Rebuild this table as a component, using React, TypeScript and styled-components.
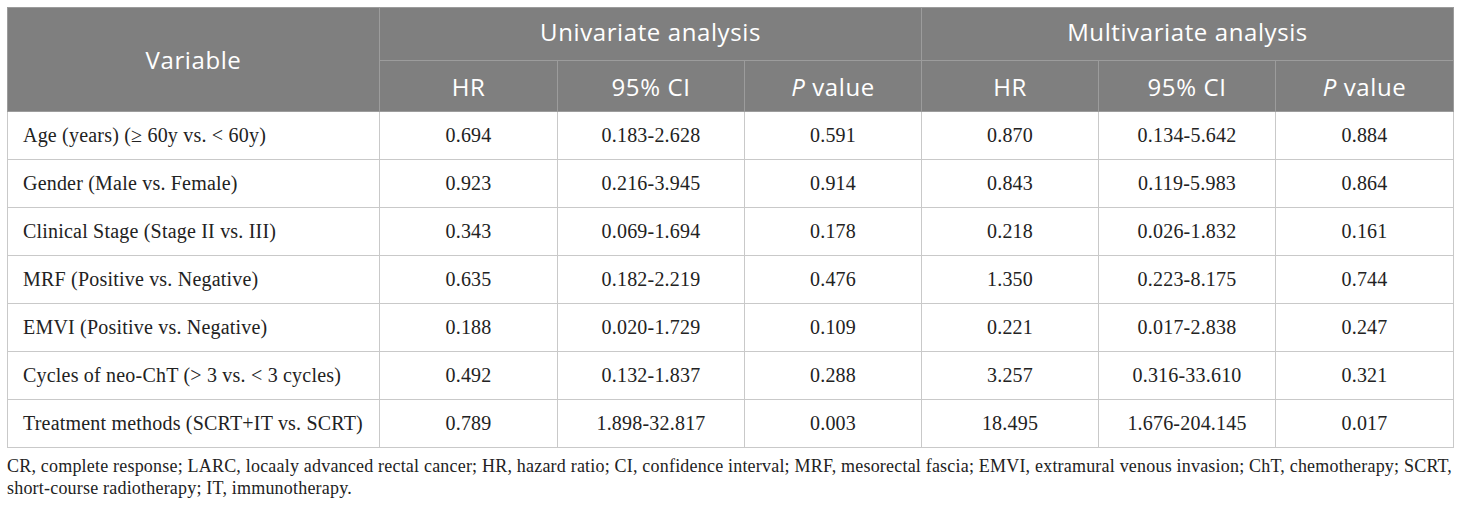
import { createGlobalStyle, styled } from "styled-components";

const GlobalStyle = createGlobalStyle`
    html, body {
        margin: 0;
        padding: 0;
        background: #fff;
    }
    body {
        font-family: "Liberation Serif", "Times New Roman", serif;
        color: #222;
    }
`;

type Row = {
    label: string;
    uni: [string, string, string];
    multi: [string, string, string];
};

const ROWS: Row[] = [
    { label: "Age (years) (≥ 60y vs. < 60y)", uni: ["0.694", "0.183-2.628", "0.591"], multi: ["0.870", "0.134-5.642", "0.884"] },
    { label: "Gender (Male vs. Female)", uni: ["0.923", "0.216-3.945", "0.914"], multi: ["0.843", "0.119-5.983", "0.864"] },
    { label: "Clinical Stage (Stage II vs. III)", uni: ["0.343", "0.069-1.694", "0.178"], multi: ["0.218", "0.026-1.832", "0.161"] },
    { label: "MRF (Positive vs. Negative)", uni: ["0.635", "0.182-2.219", "0.476"], multi: ["1.350", "0.223-8.175", "0.744"] },
    { label: "EMVI (Positive vs. Negative)", uni: ["0.188", "0.020-1.729", "0.109"], multi: ["0.221", "0.017-2.838", "0.247"] },
    { label: "Cycles of neo-ChT (> 3 vs. < 3 cycles)", uni: ["0.492", "0.132-1.837", "0.288"], multi: ["3.257", "0.316-33.610", "0.321"] },
    { label: "Treatment methods (SCRT+IT vs. SCRT)", uni: ["0.789", "1.898-32.817", "0.003"], multi: ["18.495", "1.676-204.145", "0.017"] },
];

const COLS = [372, 178, 187, 177, 177, 177, 178];

const SubHeads = () => (
    <>
        <HeadCell>HR</HeadCell>
        <HeadCell>95% CI</HeadCell>
        <HeadCell>
            <i>P</i> value
        </HeadCell>
    </>
);

export default function App() {
    return (
        <>
            <GlobalStyle />
            <Page>
                <Table>
                    <colgroup>
                        {COLS.map((w, i) => (
                            <Col key={i} $w={w} />
                        ))}
                    </colgroup>
                    <thead>
                        <HeadRow $h={53}>
                            <HeadCell rowSpan={2}>Variable</HeadCell>
                            <HeadCell colSpan={3} $lift>
                                Univariate analysis
                            </HeadCell>
                            <HeadCell colSpan={3} $lift>
                                Multivariate analysis
                            </HeadCell>
                        </HeadRow>
                        <HeadRow $h={51}>
                            <SubHeads />
                            <SubHeads />
                        </HeadRow>
                    </thead>
                    <tbody>
                        {ROWS.map((r) => (
                            <BodyRow key={r.label}>
                                <LabelCell>{r.label}</LabelCell>
                                {[...r.uni, ...r.multi].map((v, i) => (
                                    <ValueCell key={i}>{v}</ValueCell>
                                ))}
                            </BodyRow>
                        ))}
                    </tbody>
                </Table>
                <Note>
                    CR, complete response; LARC, locaaly advanced rectal cancer; HR, hazard ratio; CI, confidence
                    interval; MRF, mesorectal fascia; EMVI, extramural venous invasion; ChT, chemotherapy; SCRT,
                    <br />
                    short-course radiotherapy; IT, immunotherapy.
                </Note>
            </Page>
        </>
    );
}

const Page = styled.div`
    padding: 7px 7px 0 7px;
    width: 1446px;
`;

const Table = styled.table`
    width: 1446px;
    border-collapse: collapse;
    table-layout: fixed;
    border: 1px solid #c9c9c9;
`;

const Col = styled.col<{ $w: number }>`
    width: ${(p) => p.$w}px;
`;

const HeadRow = styled.tr<{ $h: number }>`
    height: ${(p) => p.$h}px;
    background: #7f7f7f;
`;

const HeadCell = styled.th<{ $lift?: boolean }>`
    padding: 0 0 ${(p) => (p.$lift ? "5px" : "0")} 0;
    font-family: "Open Sans", "Noto Sans", sans-serif;
    font-weight: 400;
    font-size: 24px;
    letter-spacing: 0.6px;
    color: #fff;
    text-align: center;
    vertical-align: middle;
    border: 1px solid #9c9c9c;
    & i {
        font-style: italic;
    }
`;

const BodyRow = styled.tr`
    height: 48px;
`;

const LabelCell = styled.td`
    padding: 0 0 0 15px;
    font-size: 20px;
    letter-spacing: 0.2px;
    text-align: left;
    vertical-align: middle;
    white-space: nowrap;
    border: 1px solid #c9c9c9;
`;

const ValueCell = styled(LabelCell)`
    padding: 0;
    text-align: center;
`;

const Note = styled.p`
    margin: 7px 0 0 0;
    font-size: 18px;
    line-height: 22px;
    letter-spacing: 0.2px;
    color: #222;
    white-space: nowrap;
`;
